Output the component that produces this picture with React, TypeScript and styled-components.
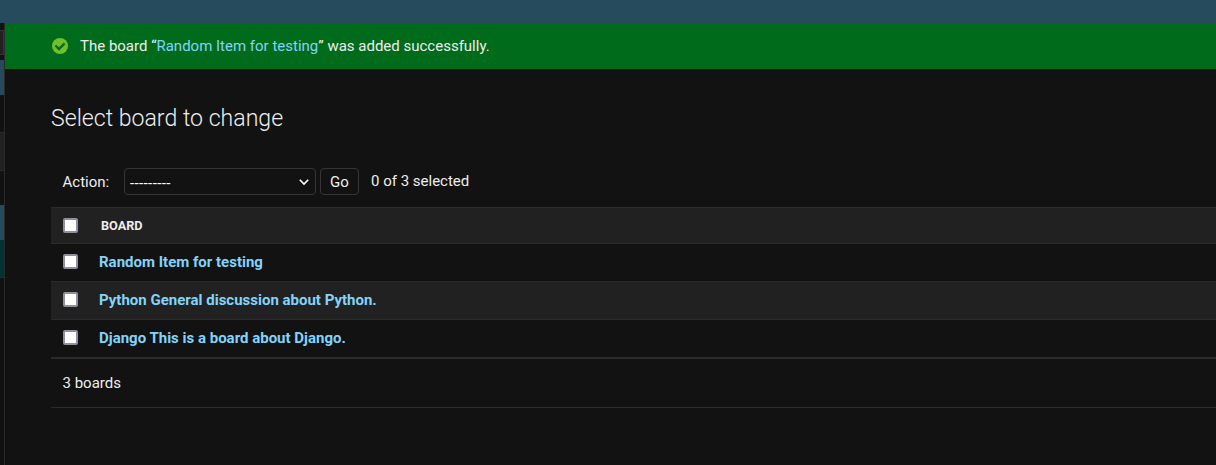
import React from "react";
import styled, { createGlobalStyle } from "styled-components";

const GlobalStyle = createGlobalStyle`
  * { box-sizing: border-box; }
  body {
    margin: 0;
    background: #121212;
    color: #eeeeee;
    font-family: Roboto, "Liberation Sans", sans-serif;
    font-size: 15px;
    line-height: 18px;
    overflow: hidden;
  }
`;

const Page = styled.div`
  display: flex;
  flex-direction: column;
  height: 465px;
`;

const TopBar = styled.header`
  flex: 0 0 23px;
  background: #264b5d;
`;

const Body = styled.div`
  display: flex;
  flex: 1;
`;

const Sidebar = styled.nav`
  flex: 0 0 5px;
  border-right: 1px solid #2b2b2b;
`;

const SidebarBlock = styled.div<{ $h: number; $bg?: string; $line?: string }>`
  height: ${(p) => p.$h}px;
  background: ${(p) => p.$bg ?? "#121212"};
  border: 0 solid ${(p) => p.$line ?? "transparent"};
  border-width: ${(p) => (p.$line ? "1px 0" : "0")};
`;

const FilterBox = styled(SidebarBlock)`
  border-right-width: 1px;
`;

const Main = styled.main`
  flex: 1;
  min-width: 0;
`;

const Message = styled.div`
  display: flex;
  align-items: center;
  height: 46px;
  padding-left: 47px;
  background: #006b1b;
`;

const MessageText = styled.span`
  margin-left: 12px;
`;

const MessageLink = styled.a`
  color: #81d4fa;
`;

const Content = styled.section`
  padding: 36px 0 0 46px;
`;

const Title = styled.h1`
  margin: 0 0 35px;
  font-size: 23.1px;
  font-weight: 300;
  line-height: 28px;
`;

const Actions = styled.div`
  display: flex;
  align-items: center;
  height: 27px;
  margin-bottom: 12px;
  padding-left: 11.5px;
`;

const ActionLabel = styled.label`
  width: 61.5px;
  padding-top: 1px;
`;

const SelectBox = styled.div`
  display: flex;
  align-items: center;
  justify-content: space-between;
  width: 192px;
  height: 27px;
  padding: 0 5px;
  border: 1px solid #353535;
  border-radius: 4px;
`;

const SelectValue = styled.span`
  padding-top: 2px;
  font-size: 15px;
  letter-spacing: 0.38px;
  color: #ffffff;
`;

const GoButton = styled.button`
  width: 39px;
  height: 27px;
  margin: 0 12px 0 4px;
  padding: 1px 0 0;
  border: 1px solid #353535;
  border-radius: 4px;
  background: #121212;
  color: #eeeeee;
  font: inherit;
`;

const SelectionCount = styled.span`
  padding-bottom: 2px;
`;

const Table = styled.div`
  border-bottom: 1px solid #2b2b2b;
`;

const Row = styled.div<{ $shaded?: boolean }>`
  display: flex;
  align-items: center;
  height: 38px;
  padding: 0 0 2px 12px;
  border-top: 1px solid #2b2b2b;
  background: ${(p) => (p.$shaded ? "#212121" : "#121212")};
`;

const HeaderRow = styled(Row)`
  height: 36px;
  padding-bottom: 0;
`;

const Checkbox = styled.input.attrs({ type: "checkbox" })`
  appearance: none;
  flex: 0 0 15px;
  height: 15px;
  margin: 0 21px 0 0;
  border: 2px solid #8f8f9d;
  border-radius: 2px;
  background: #ffffff;
`;

const HeaderText = styled.span`
  padding-left: 2px;
  font-size: 12.7px;
  font-weight: 700;
`;

const BoardLink = styled.a`
  font-weight: 700;
  color: #81d4fa;
`;

const Paginator = styled.div`
  display: flex;
  align-items: center;
  height: 50px;
  padding-left: 11.5px;
  border-top: 1px solid #2b2b2b;
  border-bottom: 1px solid #2b2b2b;
`;

const SuccessIcon = () => (
  <svg width="16" height="16" viewBox="0 0 16 16">
    <circle cx="8" cy="8" r="8" fill="#70bf2b" />
    <path d="M3.5 7.5 7 11 12.6 5.4" fill="none" stroke="#006b1b" strokeWidth="2.3" />
  </svg>
);

const Chevron = () => (
  <svg width="12" height="8" viewBox="0 0 12 8">
    <path d="M1.8 1.8 6 6 10.2 1.8" fill="none" stroke="#ffffff" strokeWidth="1.6" />
  </svg>
);

const boards = [
  "Random Item for testing",
  "Python General discussion about Python.",
  "Django This is a board about Django.",
];

export default function App() {
  return (
    <>
      <GlobalStyle />
      <Page>
        <TopBar />
        <Body>
          <Sidebar>
            <SidebarBlock $h={7} />
            <FilterBox $h={25} $bg="#212121" $line="#353535" />
            <SidebarBlock $h={5} />
            <SidebarBlock $h={35} $bg="#264b5d" />
            <SidebarBlock $h={37} />
            <SidebarBlock $h={39} $bg="#212121" $line="#2b2b2b" />
            <SidebarBlock $h={34} />
            <SidebarBlock $h={35} $bg="#264b5d" />
            <SidebarBlock $h={37} $bg="#003333" />
            <SidebarBlock $h={1} $bg="#2b2b2b" />
          </Sidebar>
          <Main>
            <Message>
              <SuccessIcon />
              <MessageText>
                The board “<MessageLink>Random Item for testing</MessageLink>” was added successfully.
              </MessageText>
            </Message>
            <Content>
              <Title>Select board to change</Title>
              <Actions>
                <ActionLabel>Action:</ActionLabel>
                <SelectBox>
                  <SelectValue>---------</SelectValue>
                  <Chevron />
                </SelectBox>
                <GoButton>Go</GoButton>
                <SelectionCount>0 of 3 selected</SelectionCount>
              </Actions>
              <Table>
                <HeaderRow $shaded>
                  <Checkbox />
                  <HeaderText>BOARD</HeaderText>
                </HeaderRow>
                {boards.map((name, i) => (
                  <Row key={name} $shaded={i % 2 === 1}>
                    <Checkbox />
                    <BoardLink>{name}</BoardLink>
                  </Row>
                ))}
              </Table>
              <Paginator>3 boards</Paginator>
            </Content>
          </Main>
        </Body>
      </Page>
    </>
  );
}
